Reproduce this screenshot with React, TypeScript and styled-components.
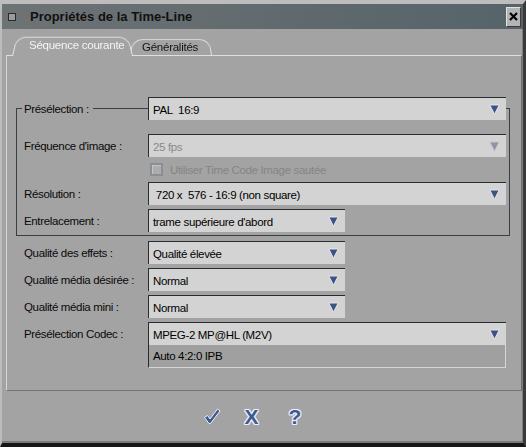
import React from 'react';
import styled, {createGlobalStyle} from "styled-components";

const narrow = `"Liberation Sans", Arial, sans-serif`

const GlobalStyle = createGlobalStyle`
  html, body {
    margin: 0;
    padding: 0;
    background: #a3a3a3;
  }
  * {
    box-sizing: border-box;
  }
`

const Window = styled.div`
  width: 526px;
  height: 447px;
  display: flex;
  flex-direction: column;
  background: #a3a3a3;
  border-top: 4px solid #bdbdbd;
  border-left: 2px solid #bcbcbc;
  border-right: 3px solid #3a3a3a;
  border-bottom: 4px solid #161616;
  box-shadow: inset 0 -2px 0 #7a7a7a, inset -1px 0 0 #7f7f7f;
  overflow: hidden;
`

const TitleBar = styled.div`
  height: 25px;
  flex-shrink: 0;
  display: flex;
  align-items: center;
  padding: 0 2px 0 6px;
  background: linear-gradient(to right, #6e7375, #5f696d 60%, #56646a);
`

const SysIcon = styled.div`
  width: 8px;
  height: 8px;
  background: #9b9b9b;
  border: 1px solid #2a2a2a;
  margin-right: 14px;
`

const Title = styled.div`
  flex: 1;
  font-family: "Liberation Sans", Arial, sans-serif;
  font-weight: bold;
  font-size: 13px;
  color: #111;
`

const CloseButton = styled.div`
  width: 15px;
  height: 20px;
  display: flex;
  align-items: center;
  justify-content: center;
  background: #b4b4b4;
  border: 1px solid;
  border-color: #e2e2e2 #3c3c3c #3c3c3c #e2e2e2;
`

const Body = styled.div`
  flex: 1;
  display: flex;
  flex-direction: column;
  padding: 5px 1px 0 4px;
`

const TabRow = styled.div`
  height: 21px;
  display: flex;
  align-items: flex-end;
  padding-left: 6px;
  flex-shrink: 0;
`

const Tab = styled.div<{ $active?: boolean }>`
  position: relative;
  width: ${p => p.$active ? 121 : 82}px;
  height: ${p => p.$active ? 21 : 17}px;
  margin-left: ${p => p.$active ? 0 : -3}px;
  margin-bottom: ${p => p.$active ? -1 : 0}px;
  padding-left: ${p => p.$active ? 17 : 12}px;
  padding-bottom: ${p => p.$active ? 1 : 0}px;
  display: flex;
  align-items: center;
  white-space: nowrap;
  font-family: ${narrow};
  font-size: 11.5px;
  letter-spacing: -0.25px;
  color: ${p => p.$active ? '#f4f4f4' : '#141414'};
  z-index: ${p => p.$active ? 2 : 1};

  &::before {
    content: '';
    position: absolute;
    inset: 0;
    border: 1px solid #e4e4e4;
    border-bottom: none;
    border-radius: 10px 10px 0 0;
    background: #a3a3a3;
    transform: perspective(30px) rotateX(7deg);
    transform-origin: bottom;
    z-index: -1;
  }
`

const Panel = styled.div`
  display: flex;
  flex-direction: column;
  border: 1px solid;
  border-color: #dedede #6c6c6c #747474 #d6d6d6;
  padding: 52px 11px 22px 9px;
`

const Group = styled.div`
  display: flex;
  flex-direction: column;
  border: 1px solid #384044;
  padding: 0 3px 3px 0;
`

const Row = styled.div<{ $gap?: number }>`
  display: grid;
  grid-template-columns: 131px 1fr;
  align-items: center;
  margin-top: ${p => p.$gap ?? 4}px;
`

const Outside = styled.div`
  display: flex;
  flex-direction: column;
  padding: 0 4px 0 1px;
  margin-top: 1px;
`

const Label = styled.div`
  padding-left: 7px;
  font-family: ${narrow};
  font-size: 11.5px;
  letter-spacing: -0.35px;
  color: #0a0a0a;
  white-space: nowrap;
`

const LegendText = styled.span`
  background: #a3a3a3;
  margin-left: -2px;
  padding: 0 4px 0 2px;
`

const Select = styled.div<{ $width?: number; $disabled?: boolean }>`
  height: 23px;
  width: ${p => p.$width ? `${p.$width}px` : '100%'};
  display: flex;
  align-items: center;
  justify-content: space-between;
  padding: 1px 6px 0 4px;
  background: #d3d3d3;
  border-top: 1px solid #262c30;
  border-left: 1px solid #262c30;
  font-family: ${narrow};
  font-size: 11.5px;
  letter-spacing: -0.35px;
  white-space: pre;
  color: ${p => p.$disabled ? '#8a8a8a' : '#000'};
`

const SubBox = styled.div`
  height: 23px;
  display: flex;
  align-items: center;
  padding-left: 4px;
  background: #a0a0a0;
  border-left: 1px solid #262c30;
  border-right: 1px solid #d6d6d6;
  border-bottom: 1px solid #d6d6d6;
  font-family: ${narrow};
  font-size: 11.5px;
  letter-spacing: -0.35px;
  color: #000;
`

const CheckLine = styled.div`
  grid-column: 2;
  display: flex;
  align-items: center;
  gap: 7px;
  padding-left: 2px;
  height: 13px;
  font-family: ${narrow};
  font-size: 11.5px;
  letter-spacing: -0.35px;
  color: #858585;
`

const CheckBox = styled.div`
  width: 13px;
  height: 13px;
  border: 2px solid #8a8e96;
  background: #adadad;
  box-shadow: inset 1px 1px 0 #c4c4c4;
`

const Footer = styled.div`
  flex: 1;
  display: flex;
  align-items: center;
  justify-content: center;
  padding: 0 24px 2px 0;
`

const FooterGlyph = styled.div<{ $space?: number }>`
  margin-left: ${p => p.$space ?? 0}px;
  font-family: "Liberation Sans", Arial, sans-serif;
  font-weight: bold;
  font-size: 21px;
  line-height: 1;
  color: #3c5a8d;
  text-shadow: 1px 0 #eef, -1px 0 #eef, 0 1px #eef, 0 -1px #eef,
  1px 1px #eef, -1px -1px #eef, 1px -1px #eef, -1px 1px #eef;
`

const Arrow: React.FC<{ disabled?: boolean }> = ({disabled}) => (
    <svg width="11" height="11" viewBox="0 0 11 11">
        <polygon points="0.8,1 10.2,1 5.5,10.2" fill={disabled ? '#8c94a6' : '#3d5283'}
                 stroke={disabled ? '#c6c9d0' : '#e4e6ee'} strokeWidth="1"/>
    </svg>
)

const Dropdown: React.FC<{ value: string; width?: number; disabled?: boolean }> = ({value, width, disabled}) => (
    <Select $width={width} $disabled={disabled}>
        <span>{value}</span>
        <Arrow disabled={disabled}/>
    </Select>
)

const App: React.FC = () => {
    return (
        <>
            <GlobalStyle/>
            <Window>
                <TitleBar>
                    <SysIcon/>
                    <Title>Propriétés de la Time-Line</Title>
                    <CloseButton>
                        <svg width="9" height="9" viewBox="0 0 9 9">
                            <path d="M1 1 L8 8 M8 1 L1 8" stroke="#000" strokeWidth="2.2"/>
                        </svg>
                    </CloseButton>
                </TitleBar>
                <Body>
                    <TabRow>
                        <Tab $active>Séquence courante</Tab>
                        <Tab>Généralités</Tab>
                    </TabRow>
                    <Panel>
                        <Group>
                            <Row $gap={-12}>
                                <Label><LegendText>Présélection :</LegendText></Label>
                                <Dropdown value="PAL  16:9"/>
                            </Row>
                            <Row $gap={14}>
                                <Label>Fréquence d'image :</Label>
                                <Dropdown value="25 fps" disabled/>
                            </Row>
                            <Row $gap={6}>
                                <CheckLine>
                                    <CheckBox/>
                                    <span>Utiliser Time Code Image sautée</span>
                                </CheckLine>
                            </Row>
                            <Row $gap={6}>
                                <Label>Résolution :</Label>
                                <Dropdown value=" 720 x  576 - 16:9 (non square)"/>
                            </Row>
                            <Row>
                                <Label>Entrelacement :</Label>
                                <Dropdown value="trame supérieure d'abord" width={197}/>
                            </Row>
                        </Group>
                        <Outside>
                            <Row>
                                <Label>Qualité des effets :</Label>
                                <Dropdown value="Qualité élevée" width={197}/>
                            </Row>
                            <Row>
                                <Label>Qualité média désirée :</Label>
                                <Dropdown value="Normal" width={197}/>
                            </Row>
                            <Row>
                                <Label>Qualité média mini :</Label>
                                <Dropdown value="Normal" width={197}/>
                            </Row>
                            <Row>
                                <Label>Présélection Codec :</Label>
                                <Dropdown value="MPEG-2 MP@HL (M2V)"/>
                            </Row>
                            <Row $gap={0}>
                                <span/>
                                <SubBox>Auto 4:2:0 IPB</SubBox>
                            </Row>
                        </Outside>
                    </Panel>
                    <Footer>
                        <svg width="18" height="18" viewBox="0 0 18 18">
                            <path d="M1.5 10.5 L4.5 8.5 L7 12 L14.5 2 L17 4 L7.5 16.5 L6 16.5 Z"
                                  fill="#3c5a8d" stroke="#eef" strokeWidth="1" strokeLinejoin="round"/>
                        </svg>
                        <FooterGlyph $space={24}>X</FooterGlyph>
                        <FooterGlyph $space={30}>?</FooterGlyph>
                    </Footer>
                </Body>
            </Window>
        </>
    )
}
export default App;
